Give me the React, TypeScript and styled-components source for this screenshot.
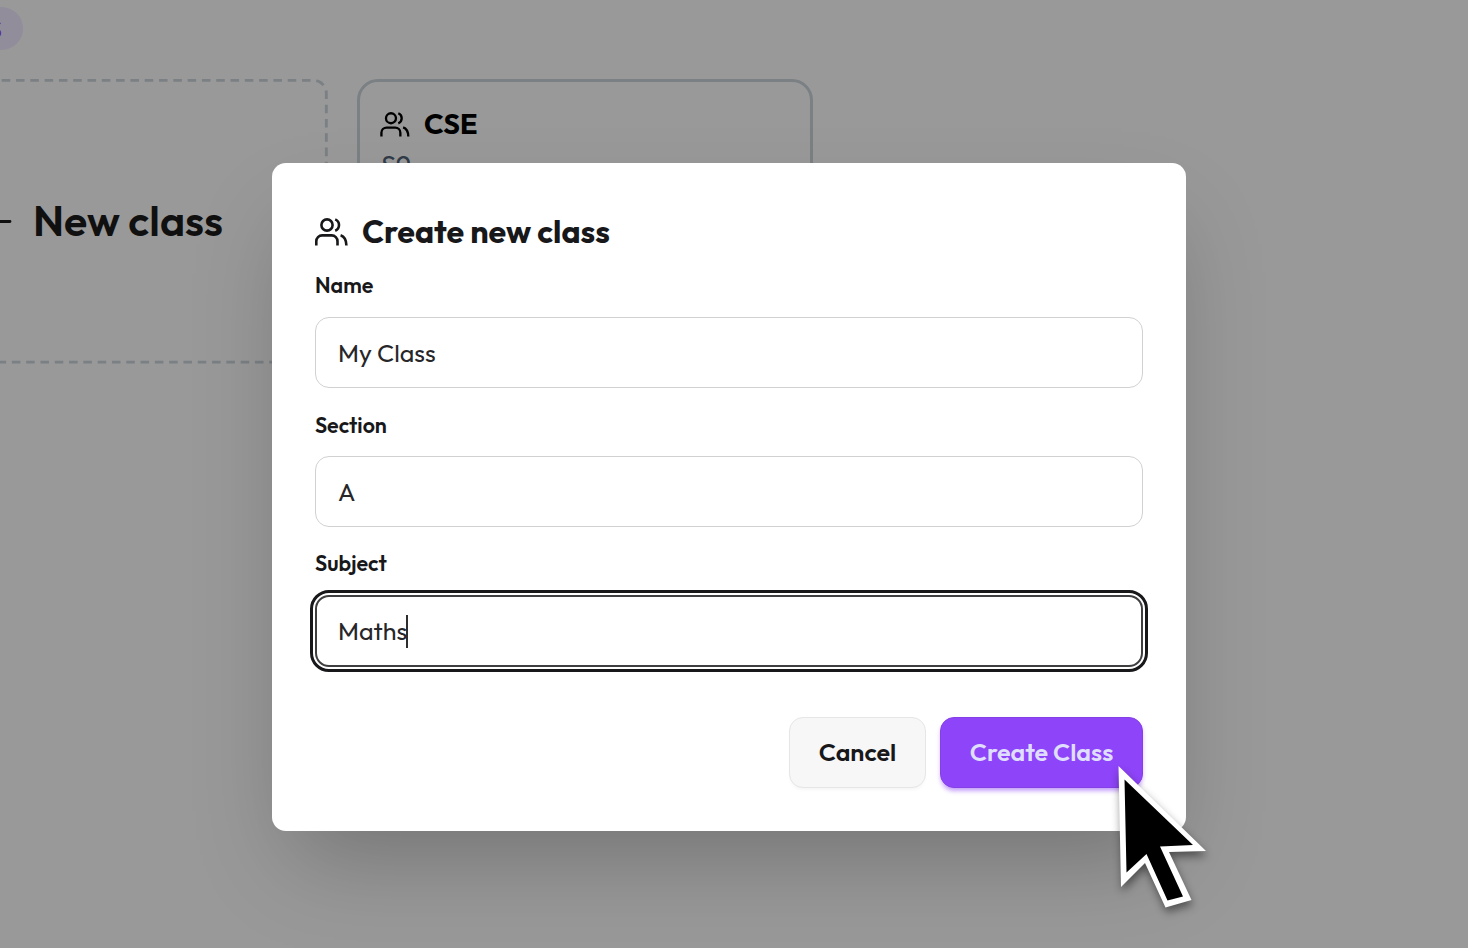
import React from "react";
import styled, { createGlobalStyle } from "styled-components";

const GlobalStyle = createGlobalStyle`
  *, *::before { box-sizing: border-box; }
  html, body { margin: 0; padding: 0; overflow: hidden; background: #fff; }
  body, button, input {
    font-family: Outfit, Lato, "Open Sans", sans-serif;
  }
`;

const Screen = styled.div`
  position: relative;
  width: 1468px;
  height: 948px;
  overflow: hidden;
  background: #999;
`;

const Content = styled.main`
  display: flex;
  flex-direction: column;
  gap: 29px;
  padding-top: 7px;
`;

const CountBadge = styled.div`
  display: flex;
  align-items: center;
  justify-content: flex-end;
  width: 93px;
  height: 43px;
  margin-left: -70px;
  padding-right: 21px;
  border-radius: 22px;
  background: #928d9b;
  color: #5a1fb0;
  font-size: 25px;
  font-weight: 500;
`;

const ClassGrid = styled.div`
  display: flex;
  align-items: flex-start;
  gap: 29px;
  margin-left: -127px;
`;

const NewClassCard = styled.div`
  position: relative;
  width: 455px;
  height: 285px;
  display: flex;
  align-items: center;
  padding-left: 111px;
  gap: 19px;
  color: #101010;

  /* the border is scaled up so its dashes are longer than the default pattern */
  &::before {
    content: "";
    position: absolute;
    left: 0;
    top: 0;
    width: 318.2px;
    height: 199.3px;
    border: 2px dashed #7b8084;
    border-radius: 10px;
    transform: scale(1.43);
    transform-origin: 0 0;
  }
`;

const NewClassText = styled.span`
  margin-top: -3px;
  font-size: 42.8px;
  font-weight: 600;
  line-height: 50px;
  white-space: nowrap;
`;

const ClassCard = styled.div`
  width: 456px;
  height: 285px;
  padding: 19px 20px;
  border: 3px solid #7b8084;
  border-radius: 21px;
`;

const ClassName = styled.h3`
  display: flex;
  align-items: center;
  gap: 14px;
  height: 46px;
  margin: 0;
  font-size: 28.6px;
  font-weight: 700;
  color: #000;
`;

const ClassCode = styled.div`
  margin-left: 1px;
  font-size: 26.8px;
  line-height: 36px;
  color: #303b48;
`;

const Dialog = styled.form`
  position: absolute;
  left: 272px;
  top: 163px;
  width: 914px;
  height: 668px;
  display: flex;
  flex-direction: column;
  padding: 43px;
  border-radius: 14px;
  background: #fff;
  color: #18181b;
  box-shadow: 0 45px 89px -21px rgba(0, 0, 0, 0.25);
`;

const DialogTitle = styled.h2`
  display: flex;
  align-items: center;
  gap: 14px;
  height: 51px;
  margin: 0;
  font-size: 32.1px;
  font-weight: 700;
  white-space: nowrap;
`;

const TitleText = styled.span`
  margin-top: -2px;
`;

const Field = styled.label`
  display: flex;
  flex-direction: column;
  height: 139px;
`;

const FieldLabel = styled.span`
  height: 60px;
  padding-top: 16px;
  font-size: 21.4px;
  line-height: 26px;
  font-weight: 600;

  ${Field} + ${Field} & {
    padding-top: 17px;
  }

  ${Field} + ${Field} + ${Field} & {
    padding-top: 16px;
  }
`;

const FieldBox = styled.span<{ $active?: boolean }>`
  display: flex;
  align-items: center;
  height: ${(p) => (p.$active ? 72 : 71)}px;
  flex: none;
  padding: 0 ${(p) => (p.$active ? 21 : 22)}px 0;
  border: ${(p) => (p.$active ? "2px solid #3f3f42" : "1.8px solid #d1d1d1")};
  border-radius: 14px;
  outline: ${(p) => (p.$active ? "3px solid #18181b" : "none")};
  outline-offset: 2px;
  font-size: 25px;
  color: #27272a;
`;

const Caret = styled.i`
  width: 2px;
  height: 33px;
  margin-left: -1px;
  background: #2e2e31;
`;

const Actions = styled.div`
  display: flex;
  justify-content: flex-end;
  gap: 14px;
  margin-top: 43px;
`;

const Button = styled.button<{ $primary?: boolean }>`
  width: ${(p) => (p.$primary ? 203 : 137)}px;
  height: 71px;
  padding: 0 0 2px;
  border: 1.8px solid ${(p) => (p.$primary ? "#8440e4" : "#e6e6e6")};
  border-radius: 14px;
  background: ${(p) => (p.$primary ? "#8e44f8" : "#f7f7f7")};
  color: ${(p) => (p.$primary ? "#dfdeff" : "#18181b")};
  font-size: 25px;
  font-weight: 600;
  white-space: nowrap;
  box-shadow: ${(p) =>
    p.$primary ? "0 5px 5px -3px rgba(142,68,248,.4), 0 3px 4px rgba(142,68,248,.25)" : "0 3px 4px -2px rgba(0,0,0,.06)"};
`;

const Pointer = styled.svg`
  position: absolute;
  left: 1105px;
  top: 755px;
  filter: drop-shadow(1px 5px 4px rgba(0, 0, 0, 0.45));
`;

const PeopleIcon = ({ width, height }: { width: number; height: number }) => (
  <svg width={width} height={height} viewBox="0 0 33 28" fill="none" stroke="currentColor" strokeWidth="2.6">
    <circle cx="12" cy="7" r="5.6" />
    <path d="M1.3 27.5v-4.3a5.8 5.8 0 0 1 5.8-5.8h9.6a5.8 5.8 0 0 1 5.8 5.8v4.3M20.2 1.4a6.1 6.1 0 0 1 0 11.3M25.6 17.3q5.6 1.8 5.8 10.2" />
  </svg>
);

export default function App() {
  return (
    <Screen>
      <GlobalStyle />
      <Content>
        <CountBadge>S</CountBadge>
        <ClassGrid>
          <NewClassCard>
            <svg width="30" height="30" viewBox="0 0 30 30" stroke="currentColor" strokeWidth="2.8" strokeLinecap="round">
              <path d="M2 14.5h24M14 2v25" />
            </svg>
            <NewClassText>New class</NewClassText>
          </NewClassCard>
          <ClassCard>
            <ClassName>
              <PeopleIcon width={30} height={25} />
              <TitleText>CSE</TitleText>
            </ClassName>
            <ClassCode>S9</ClassCode>
          </ClassCard>
        </ClassGrid>
      </Content>
      <Dialog>
        <DialogTitle>
          <PeopleIcon width={33} height={28} />
          <TitleText>Create new class</TitleText>
        </DialogTitle>
        <Field>
          <FieldLabel>Name</FieldLabel>
          <FieldBox>My Class</FieldBox>
        </Field>
        <Field>
          <FieldLabel>Section</FieldLabel>
          <FieldBox>A</FieldBox>
        </Field>
        <Field>
          <FieldLabel>Subject</FieldLabel>
          <FieldBox $active>
            Maths
            <Caret />
          </FieldBox>
        </Field>
        <Actions>
          <Button type="button">Cancel</Button>
          <Button type="button" $primary>
            Create Class
          </Button>
        </Actions>
      </Dialog>
      <Pointer width="115" height="165" viewBox="0 0 115 165">
        <path d="M13.5 11 101 96 64 97 86.5 145 60.5 152.5 40 108 16 132Z" fill="#fff" />
        <path d="M19.5 24.5 88 90 55 91.5 78 141.5 62.5 145.5 41.5 99 21.5 117.5Z" fill="#000" />
      </Pointer>
    </Screen>
  );
}
